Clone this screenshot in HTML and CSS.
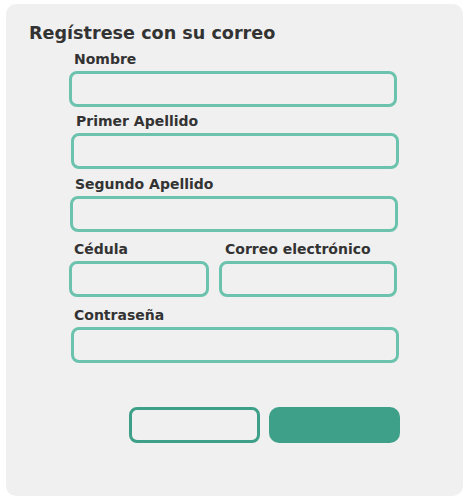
FILE: index.html
```html
<!DOCTYPE html>
<html lang="es">
<head>
<meta charset="utf-8">
<link rel="stylesheet" href="styles.css">
</head>
<body>
<div class="card">
  <h1 class="title">Regístrese con su correo</h1>
  <form class="form">
    <div class="field full"><label class="label">Nombre</label><div class="input"></div></div>
    <div class="field full shift2 gap6"><label class="label">Primer Apellido</label><div class="input"></div></div>
    <div class="field full shift1 gap7"><label class="label">Segundo Apellido</label><div class="input"></div></div>
    <div class="row gap9">
      <div class="field small"><label class="label">Cédula</label><div class="input"></div></div>
      <div class="field wide"><label class="label pad6">Correo electrónico</label><div class="input"></div></div>
    </div>
    <div class="field full shift2 gap10"><label class="label pad3">Contraseña</label><div class="input"></div></div>
    <div class="actions">
      <div class="btn outline"></div>
      <div class="btn filled"></div>
    </div>
  </form>
</div>
</body>
</html>
```
FILE: styles.css
```css
html, body { margin: 0; padding: 0; background: #ffffff; }
body { font-family: "DejaVu Sans", Verdana, sans-serif; color: #333333; }
.card {
  margin: 4px 0 0 6px;
  width: 457px;
  height: 492px;
  box-sizing: border-box;
  background: #f0f0f0;
  border-radius: 10px;
  padding: 17px 0 0 23px;
}
.title {
  margin: 0;
  font-size: 17.6px;
  line-height: 24px;
  font-weight: bold;
}
.form {
  margin: 6px 0 0 40px;
  width: 340px;
  display: flex;
  flex-direction: column;
  align-items: flex-start;
}
.field { display: flex; flex-direction: column; flex-shrink: 0; }
.field.full { width: 328px; }
.field.shift1 { margin-left: 1px; }
.field.shift2 { margin-left: 2px; }
.gap6 { margin-top: 6px; }
.gap7 { margin-top: 7px; }
.gap9 { margin-top: 9px; }
.gap10 { margin-top: 10px; }
.label {
  font-size: 14px;
  line-height: 17px;
  font-weight: bold;
  padding-left: 5px;
  margin-bottom: 3px;
}
.label.pad6 { padding-left: 6px; }
.label.pad3 { padding-left: 3px; }
.input {
  height: 36px;
  box-sizing: border-box;
  border: 3px solid #6cc3ad;
  border-radius: 8px;
}
.row { display: flex; gap: 10px; }
.small { width: 140px; }
.wide { width: 178px; }
.actions {
  display: flex;
  gap: 9px;
  margin: 44px 0 0 60px;
}
.btn { width: 131px; height: 36px; box-sizing: border-box; flex-shrink: 0; }
.outline { border: 3px solid #3fa08a; border-radius: 8px; }
.filled { background: #3fa08a; border-radius: 10px; }
```
